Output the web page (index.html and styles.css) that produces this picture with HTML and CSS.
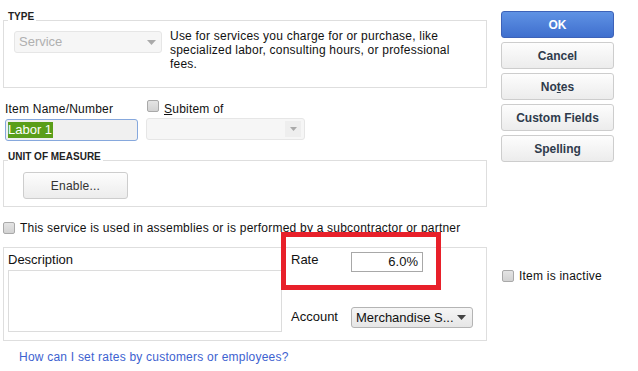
FILE: index.html
```html
<!DOCTYPE html>
<html lang="en">
<head>
    <meta charset="UTF-8">
    <title>Edit Item</title>
    <link rel="stylesheet" href="styles.css">
</head>
<body>
    <div class="dialog">
        <div class="main">
            <div class="group type-group">
                <div class="group-title">TYPE</div>
                <div class="type-row">
                    <div class="select disabled type-select">
                        <span>Service</span>
                        <svg width="9" height="5" viewBox="0 0 9 5"><polygon points="0,0 9,0 4.5,5" fill="#aaa"/></svg>
                    </div>
                    <div class="type-text">Use for services you charge for or purchase, like specialized labor, consulting hours, or professional fees.</div>
                </div>
            </div>

            <div class="name-row">
                <div class="name-col">
                    <div class="label">Item Name/Number</div>
                    <div class="text-input focused"><span class="selected">Labor 1</span></div>
                </div>
                <div class="sub-col">
                    <div class="check-row">
                        <span class="checkbox sub-check"></span>
                        <span class="label"><u>S</u>ubitem of</span>
                    </div>
                    <div class="select disabled sub-select">
                        <span></span>
                        <span class="arrow-box"><svg width="7" height="4" viewBox="0 0 7 4"><polygon points="0,0 7,0 3.5,4" fill="#aaa"/></svg></span>
                    </div>
                </div>
            </div>

            <div class="group uom-group">
                <div class="group-title">UNIT OF MEASURE</div>
                <div class="button enable-button">Enable...</div>
            </div>

            <div class="check-row assembly-row">
                <span class="checkbox"></span>
                <span class="label">This service is used in assemblies or is performed by a subcontractor or partner</span>
            </div>

            <div class="detail-box">
                <div class="desc-panel">
                    <div class="label">Description</div>
                    <div class="textarea"></div>
                </div>
                <div class="rate-panel">
                    <div class="rate-row">
                        <div class="label field-label">Rate</div>
                        <div class="rate-input">6.0%</div>
                    </div>
                    <div class="account-row">
                        <div class="label field-label">Account</div>
                        <div class="select account-select">
                            <span>Merchandise S...</span>
                            <svg width="9" height="5" viewBox="0 0 9 5"><polygon points="0,0 9,0 4.5,5" fill="#444"/></svg>
                        </div>
                    </div>
                </div>
                <div class="highlight"></div>
            </div>

            <a class="help-link" href="#">How can I set rates by customers or employees?</a>
        </div>

        <div class="side">
            <div class="button side-button primary">OK</div>
            <div class="button side-button">Cancel</div>
            <div class="button side-button">No<u>t</u>es</div>
            <div class="button side-button">Custom Fields</div>
            <div class="button side-button">Spellin<u>g</u></div>
            <div class="check-row inactive-row">
                <span class="checkbox"></span>
                <span class="label">Item is inactive</span>
            </div>
        </div>
    </div>
</body>
</html>
```

FILE: styles.css
```css
body {
    margin: 0;
    font-family: "Liberation Sans", Arial, sans-serif;
    font-size: 12px;
    line-height: 14px;
    letter-spacing: 0.22px;
    color: #111;
    background-color: #fff;
}
.dialog {
    display: flex;
    padding-left: 3px;
}
.main {
    width: 484px;
    padding-top: 20px;
}
.side {
    width: 113px;
    margin-left: 14px;
    padding-top: 11px;
}
.group {
    border: 1px solid #dedede;
    padding: 0 4px;
}
.group-title {
    display: table;
    margin-top: -9px;
    padding: 0 2px 0 0;
    background-color: #fff;
    font-size: 10px;
    line-height: 10px;
    font-weight: bold;
    letter-spacing: 0;
    color: #222;
}
.type-group {
    padding-bottom: 16px;
}
.type-row {
    display: flex;
    align-items: flex-start;
    margin: 7px 0 0 6px;
}
.type-text {
    width: 300px;
    margin-left: 8px;
}
.select {
    box-sizing: border-box;
    display: flex;
    align-items: center;
    justify-content: space-between;
    border-radius: 3px;
    padding: 0 5px 0 4px;
    letter-spacing: 0;
}
.select.disabled {
    background-color: #f6f6f6;
    border: 1px solid #e6e6e6;
    color: #b0b0b0;
}
.type-select {
    width: 148px;
    height: 22px;
    margin-top: 2px;
    font-size: 13px;
}
.name-row {
    display: flex;
    margin: 14px 0 0 2px;
}
.name-col {
    width: 133px;
}
.text-input {
    box-sizing: border-box;
    height: 22px;
    margin-top: 3px;
    padding: 2px;
    border: 1px solid #86a8dd;
    border-radius: 3px;
    background-color: #f0f0f0;
}
.selected {
    display: inline-block;
    padding: 1px 1px 1px 0;
    background-color: #5a9e19;
    color: #fff;
    font-size: 13px;
    line-height: 14px;
    letter-spacing: 0;
}
.sub-col {
    width: 159px;
    margin-left: 8px;
}
.check-row {
    display: flex;
    align-items: flex-start;
}
.checkbox {
    box-sizing: border-box;
    width: 12px;
    height: 12px;
    border: 1px solid #a9a9a9;
    border-radius: 2px;
    background: linear-gradient(#e4e4e4, #d2d2d2);
    margin-right: 5px;
    flex-shrink: 0;
}
.sub-check {
    margin-top: -2px;
    margin-left: 1px;
}
.sub-select {
    height: 22px;
    margin-top: 2px;
    padding-right: 3px;
}
.arrow-box {
    display: flex;
    align-items: center;
    justify-content: center;
    width: 16px;
    height: 16px;
    background-color: #eeeeee;
}
.uom-group {
    margin-top: 19px;
    padding-bottom: 7px;
}
.button {
    box-sizing: border-box;
    display: flex;
    align-items: center;
    justify-content: center;
    height: 27px;
    border: 1px solid #cdcdcd;
    border-radius: 3px;
    background: linear-gradient(#fdfdfd, #ececec);
    color: #333;
}
.enable-button {
    width: 105px;
    margin: 10px 0 0 15px;
}
.assembly-row {
    margin-top: 14px;
}
.assembly-row .checkbox {
    margin-top: 1px;
}
.detail-box {
    position: relative;
    display: flex;
    margin-top: 12px;
    border: 1px solid #dedede;
}
.desc-panel {
    padding: 5px 0 8px 4px;
}
.desc-panel .label {
    font-size: 13px;
    letter-spacing: 0;
}
.textarea {
    box-sizing: border-box;
    width: 274px;
    height: 62px;
    margin-top: 3px;
    border: 1px solid #dcdcdc;
}
.rate-panel {
    padding: 4px 0 0 9px;
}
.rate-row, .account-row {
    display: flex;
    align-items: flex-start;
}
.field-label {
    width: 60px;
    font-size: 13px;
    letter-spacing: 0;
}
.rate-row .field-label {
    margin-top: 1px;
}
.rate-input {
    box-sizing: border-box;
    width: 72px;
    height: 20px;
    padding: 2px 4px 0 0;
    border: 1px solid #a8a8a8;
    text-align: right;
    font-size: 13px;
    letter-spacing: 0;
}
.account-row {
    margin-top: 35px;
}
.account-row .field-label {
    margin-top: 3px;
}
.account-select {
    width: 122px;
    height: 21px;
    border: 1px solid #b4b4b4;
    background: linear-gradient(#f6f6f6, #e6e6e6);
    color: #111;
    font-size: 13px;
    padding-right: 6px;
}
.highlight {
    position: absolute;
    left: 277px;
    top: -16px;
    width: 160px;
    height: 58px;
    box-sizing: border-box;
    border: 5px solid #e8202a;
}
.help-link {
    display: block;
    margin: 9px 0 0 16px;
    color: #3d62d0;
    text-decoration: none;
}
.side-button {
    margin-bottom: 4px;
    font-weight: bold;
    letter-spacing: 0;
    color: #2f3b4c;
}
.side-button.primary {
    border-color: #3d62b8;
    background: linear-gradient(#5f92e4, #3f6fce);
    color: #fff;
}
.inactive-row {
    margin: 107px 0 0 1px;
}
.inactive-row .checkbox {
    margin-top: 1px;
}
```
